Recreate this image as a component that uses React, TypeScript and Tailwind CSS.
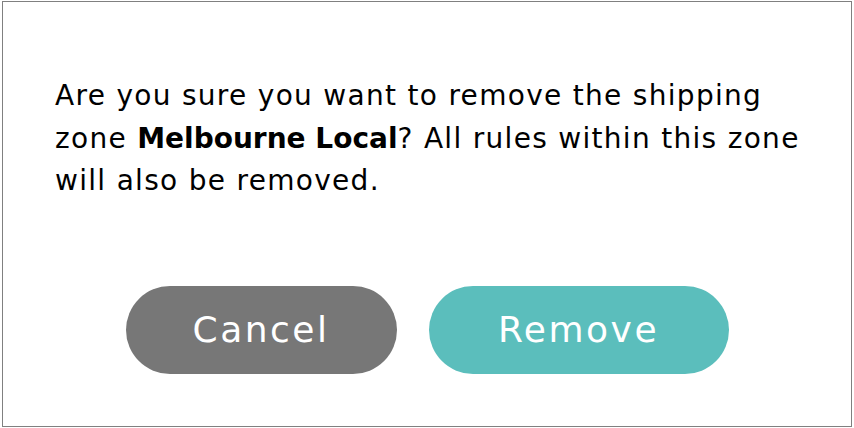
export default function App() {
  return (
    <div className="h-[428px] w-[854px] bg-white pl-[2px] pt-[1px] font-['DejaVu_Sans',sans-serif]">
      <div className="flex h-[426px] w-[850px] flex-col border border-[#808080] px-[52px] pt-[73px]">
        <p className="whitespace-nowrap text-[28px] leading-[42.5px] tracking-[1.3px] text-black">
          Are you sure you want to remove the shipping
          <br />
          zone <span className="font-bold tracking-normal">Melbourne Local</span>? All rules within this zone
          <br />
          will also be removed.
        </p>
        <div className="mt-[83px] flex justify-center gap-8">
          <button className="flex h-[88px] w-[271px] items-center justify-center rounded-full bg-[#777777] text-[36px] tracking-[2.5px] text-white">
            Cancel
          </button>
          <button className="flex h-[88px] w-[300px] items-center justify-center rounded-full bg-[#5bbebc] text-[36px] tracking-[2.5px] text-white">
            Remove
          </button>
        </div>
      </div>
    </div>
  )
}
